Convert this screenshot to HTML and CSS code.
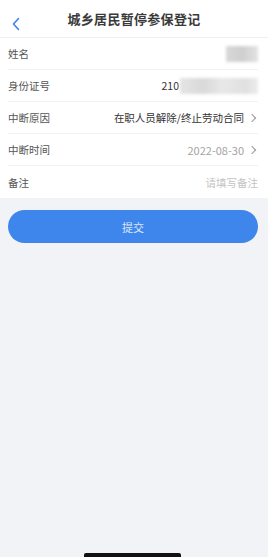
FILE: index.html
```html
<!DOCTYPE html>
<html lang="zh-CN">
<head>
    <meta charset="UTF-8">
    <meta name="viewport" content="width=device-width, initial-scale=1.0">
    <title>城乡居民暂停参保登记</title>
    <link rel="stylesheet" href="styles.css">
</head>
<body>
    <div class="page">
        <div class="header">
            <span class="back">
                <svg width="10" height="14" viewBox="0 0 10 14"><path d="M7.5 1.5 L2.5 7 L7.5 12.5" fill="none" stroke="#3d84ee" stroke-width="1.6" stroke-linecap="round" stroke-linejoin="round"/></svg>
            </span>
            <div class="title">城乡居民暂停参保登记</div>
        </div>
        <div class="form">
            <div class="row">
                <span class="label">姓名</span>
                <span class="value"><span class="blur blur-name"></span></span>
            </div>
            <div class="row">
                <span class="label">身份证号</span>
                <span class="value">210<span class="blur blur-id"></span></span>
            </div>
            <div class="row">
                <span class="label">中断原因</span>
                <span class="value">在职人员解除/终止劳动合同<i class="arrow"></i></span>
            </div>
            <div class="row">
                <span class="label">中断时间</span>
                <span class="value muted">2022-08-30<i class="arrow"></i></span>
            </div>
            <div class="row last">
                <span class="label">备注</span>
                <span class="value hint">请填写备注</span>
            </div>
        </div>
        <div class="actions">
            <button class="submit">提交</button>
        </div>
        <div class="spacer"></div>
        <div class="home"><span></span></div>
    </div>
</body>
</html>
```

FILE: styles.css
```css
body{
    margin:0px;
    padding:0px;
    background-color:#f2f3f7;
    font-family: "Noto Sans CJK SC", "Noto Sans", sans-serif;
}
.page{
    display: flex;
    flex-direction: column;
    height: 557px;
}
.header{
    position: relative;
    height: 37px;
    background-color: #fff;
    border-bottom: 1px solid #eeeff2;
    display: flex;
    align-items: center;
    justify-content: center;
}
.back{
    position: absolute;
    left: 11px;
    top: 12px;
}
.title{
    font-size: 13px;
    font-weight: bold;
    color: #3a3a3a;
    letter-spacing: 0.3px;
}
.form{
    background-color: #fff;
    padding: 0 10px 0 8px;
}
.row{
    height: 32px;
    box-sizing: border-box;
    border-bottom: 1px solid #f1f2f4;
    display: flex;
    align-items: center;
    justify-content: space-between;
    font-size: 10.5px;
}
.row.last{
    border-bottom: none;
}
.label{
    color: #555;
    font-size: 10.5px;
}
.value{
    display: flex;
    align-items: center;
    color: #333;
}
.value.muted{
    color: #a3a3a3;
    font-size: 11px;
}
.value.hint{
    color: #c3c3c3;
}
.arrow{
    display: inline-block;
    width: 5px;
    height: 5px;
    border-top: 1px solid #999;
    border-right: 1px solid #999;
    transform: rotate(45deg);
    margin: 0 3px 0 5px;
}
.blur{
    display: inline-block;
    height: 16px;
    filter: blur(1.5px);
}
.blur-name{
    width: 32px;
    background-image: linear-gradient(to right,#d8d8d8,#cfcfcf 50%,#e2e2e2);
}
.blur-id{
    width: 78px;
    margin-left: 1px;
    background-image: linear-gradient(to right,#e4e4e4,#d9d9d9 30%,#e8e8e8 55%,#e0e0e0 85%,#ececec);
}
.actions{
    padding: 12px 10px 0 8px;
}
.submit{
    width: 100%;
    height: 33px;
    border: none;
    border-radius: 17px;
    background-color: #3e86ec;
    color: #dfe8f7;
    font-size: 11px;
    font-family: "Noto Sans CJK SC", sans-serif;
}
.spacer{
    flex: 1;
}
.home{
    display: flex;
    justify-content: center;
    padding-right: 4px;
}
.home span{
    width: 97px;
    height: 4px;
    background-color: #111;
    border-radius: 2px 2px 0 0;
}
```
